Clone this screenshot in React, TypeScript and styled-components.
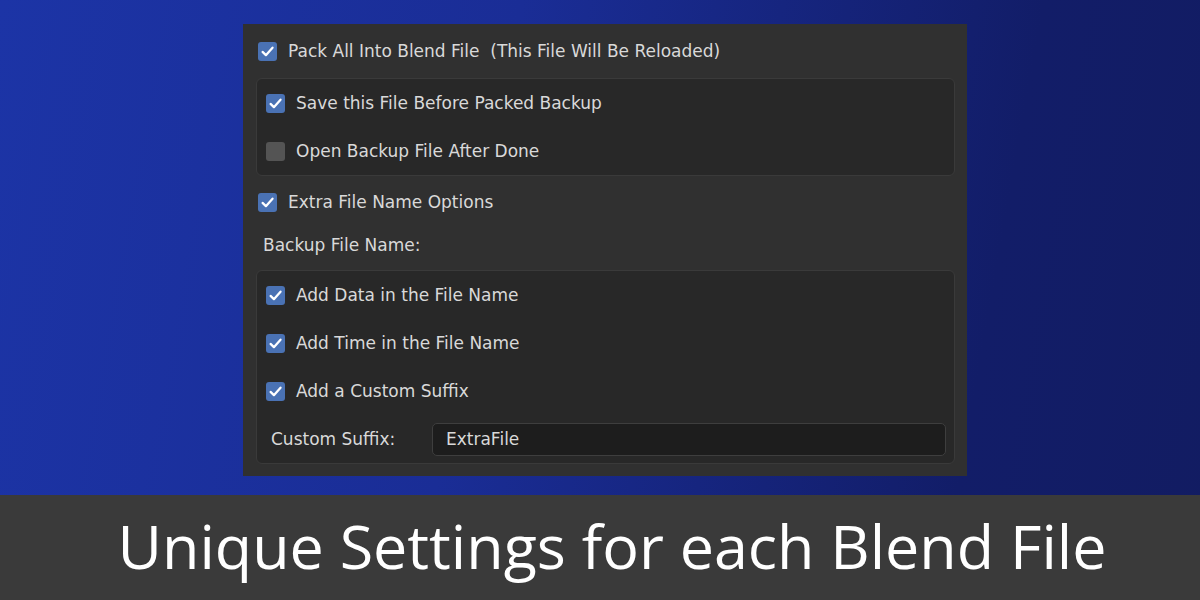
import React from 'react';
import styled, { createGlobalStyle } from 'styled-components';

const GlobalStyle = createGlobalStyle`
  html, body {
    margin: 0;
    padding: 0;
    width: 1200px;
    height: 600px;
    overflow: hidden;
  }
`;

const Page = styled.div`
  width: 1200px;
  height: 600px;
  display: flex;
  flex-direction: column;
  background: linear-gradient(100deg, #1c34a6 0%, #1a2d96 40%, #121d68 80%, #121c62 100%);
`;

const Stage = styled.div`
  height: 495px;
  display: flex;
  justify-content: center;
  padding-top: 24px;
  padding-left: 10px;
  box-sizing: border-box;
`;

const Panel = styled.div`
  width: 724px;
  height: 452px;
  box-sizing: border-box;
  background: #303030;
  padding: 0 12px 0 13px;
  display: flex;
  flex-direction: column;
  font-family: 'DejaVu Sans', sans-serif;
  font-size: 17px;
  color: #d9d9d9;
`;

const Row = styled.div<{ $h?: number; $indent?: number }>`
  height: ${p => p.$h ?? 48}px;
  display: flex;
  align-items: center;
  gap: 11px;
  padding-left: ${p => p.$indent ?? 2}px;
  flex-shrink: 0;
`;

const Box = styled.div<{ $top: number }>`
  margin-top: ${p => p.$top}px;
  background: #282828;
  border: 1px solid #3a3a3a;
  border-radius: 6px;
  padding: 0 8px 0 7px;
  display: flex;
  flex-direction: column;
`;

const Check = styled.span<{ $on: boolean }>`
  width: 19px;
  height: 19px;
  border-radius: 3px;
  background: ${p => (p.$on ? '#4a72b4' : '#545454')};
  display: flex;
  align-items: center;
  justify-content: center;
  flex-shrink: 0;
`;

const Label = styled.span`
  white-space: pre;
`;

const FieldLabel = styled.span`
  width: 150px;
  padding-left: 7px;
  flex-shrink: 0;
`;

const Input = styled.div`
  flex: 1;
  height: 33px;
  box-sizing: border-box;
  background: #1d1d1d;
  border: 1px solid #3e3e3e;
  border-radius: 5px;
  display: flex;
  align-items: center;
  padding-left: 13px;
`;

const Caption = styled.div`
  flex: 1;
  background: #3a3a3a;
  color: #ffffff;
  font-family: 'Open Sans', sans-serif;
  font-size: 61px;
  display: flex;
  align-items: center;
  justify-content: center;
  padding-left: 24px;
  padding-bottom: 4px;
`;

const Tick = () => (
  <svg width="15" height="15" viewBox="0 0 14 14">
    <path d="M2.4 7.4 L5.5 10.4 L11.7 3.4" fill="none" stroke="#ffffff" strokeWidth="2.1" strokeLinecap="round" strokeLinejoin="round" />
  </svg>
);

const CheckRow = ({ on, text, h, indent }: { on: boolean; text: string; h?: number; indent?: number }) => (
  <Row $h={h} $indent={indent}>
    <Check $on={on}>{on && <Tick />}</Check>
    <Label>{text}</Label>
  </Row>
);

export default function App() {
  return (
    <>
      <GlobalStyle />
      <Page>
        <Stage>
          <Panel>
            <CheckRow on text="Pack All Into Blend File  (This File Will Be Reloaded)" h={54} />
            <Box $top={0}>
              <CheckRow on text="Save this File Before Packed Backup" />
              <CheckRow on={false} text="Open Backup File After Done" />
            </Box>
            <CheckRow on text="Extra File Name Options" h={52} />
            <Row $h={34} $indent={7}>
              <Label>Backup File Name:</Label>
            </Row>
            <Box $top={8}>
              <CheckRow on text="Add Data in the File Name" />
              <CheckRow on text="Add Time in the File Name" />
              <CheckRow on text="Add a Custom Suffix" />
              <Row $h={48} $indent={0}>
                <FieldLabel>Custom Suffix:</FieldLabel>
                <Input>ExtraFile</Input>
              </Row>
            </Box>
          </Panel>
        </Stage>
        <Caption>Unique Settings for each Blend File</Caption>
      </Page>
    </>
  );
}
